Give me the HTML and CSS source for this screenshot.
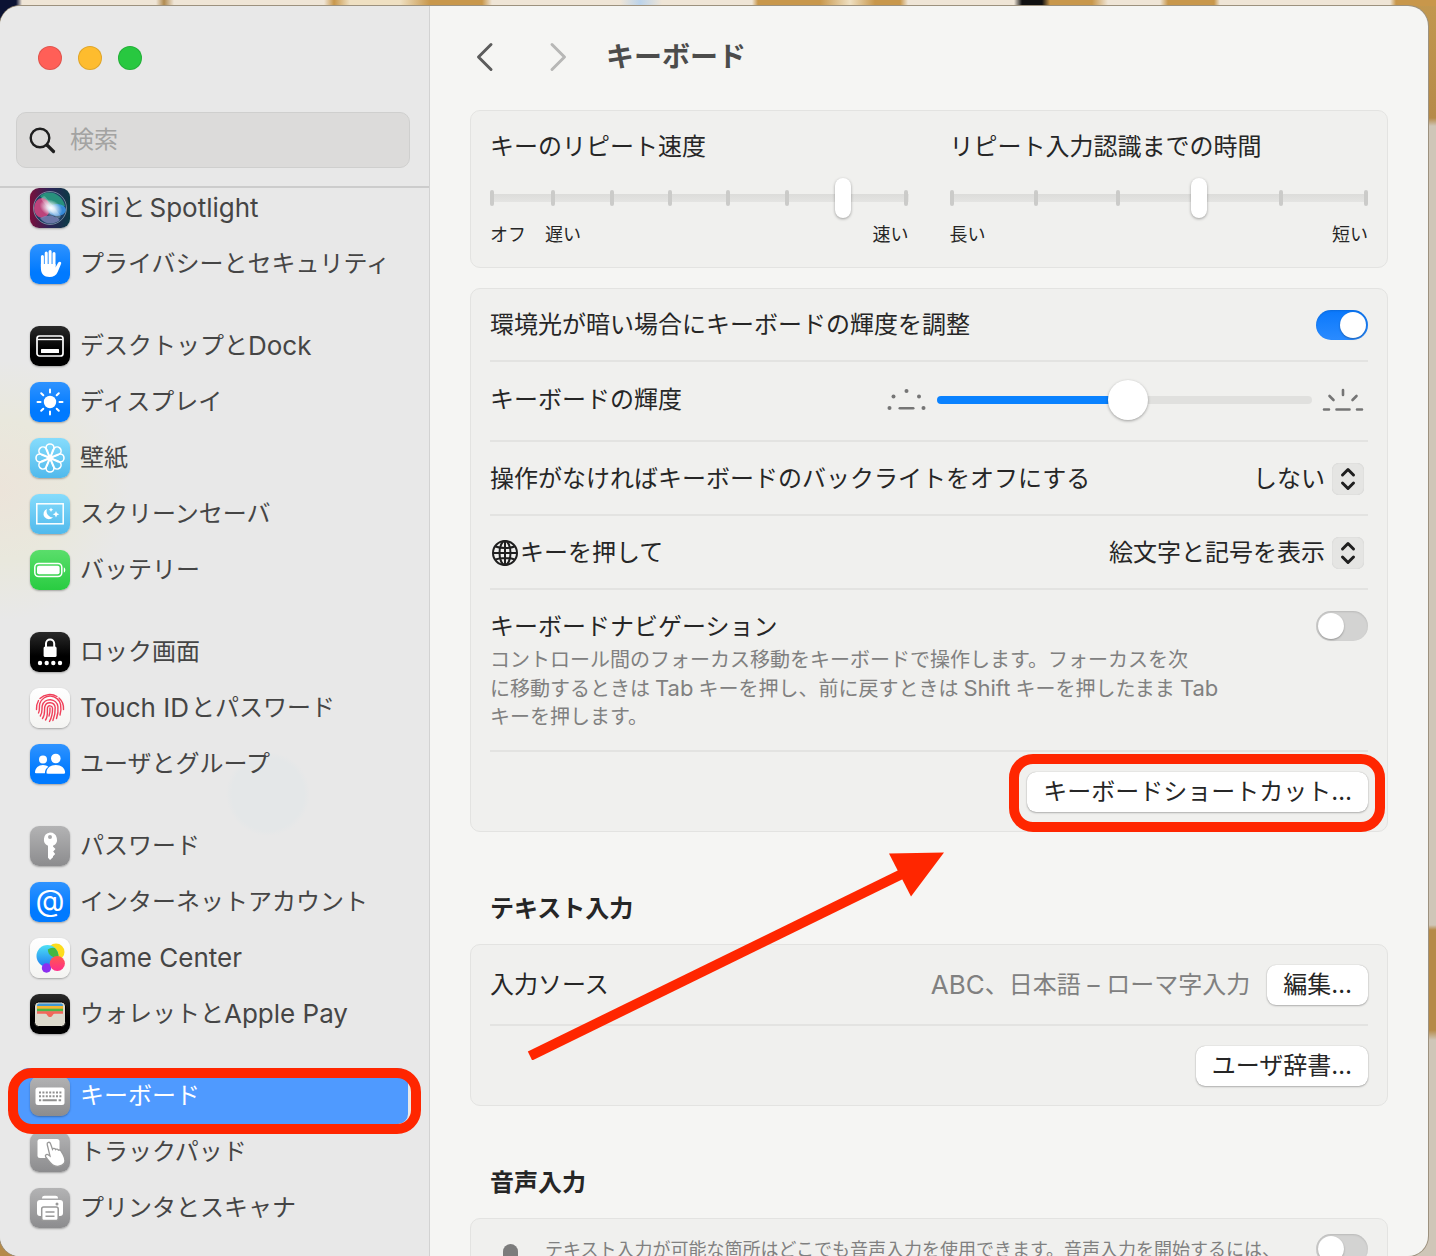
FILE: index.html
```html
<!DOCTYPE html>
<html lang="ja">
<head>
  <meta charset="UTF-8" />
  <meta name="viewport" content="width=device-width, initial-scale=1.0"/>
  <title>キーボード</title>
  <link rel="stylesheet" href="styles.css">
</head>
<body>
<div class="window">
  <aside class="sidebar">
    <div class="lights">
      <button class="light red" aria-label="閉じる"></button>
      <button class="light yellow" aria-label="しまう"></button>
      <button class="light green" aria-label="拡大"></button>
    </div>
    <label class="search">
      <svg width="28" height="28" viewBox="0 0 28 28" fill="none" stroke="#1f1f1f" stroke-linecap="round"><circle cx="11" cy="12" r="9.300" stroke-width="2.400"/><path d="M18 19l6.500 6.500" stroke-width="3.200"/></svg>
      <input type="search" placeholder="検索" aria-label="検索">
    </label>
    <nav class="list">
      <ul>
        <li><a href="#siri"><span class="icon siri"><svg viewBox="0 0 40 40">
          <defs>
            <linearGradient id="siriBg"><stop offset="0" stop-color="#7a0f3c"/><stop offset=".5" stop-color="#2b2358"/><stop offset="1" stop-color="#0c3b45"/></linearGradient>
            <radialGradient id="siriGlow"><stop offset="0" stop-color="#fff"/><stop offset=".35" stop-color="#eef6fb" stop-opacity=".85"/><stop offset="1" stop-color="#fff" stop-opacity="0"/></radialGradient>
          </defs>
          <rect width="40" height="40" rx="9" fill="url(#siriBg)"/>
          <circle cx="20" cy="20" r="16.500" fill="#1d3f63"/>
          <path d="M10 8c8-7 22-3 25 10-8 4-16 1-25-10z" fill="#2a9f80" opacity=".85"/>
          <ellipse cx="12" cy="20" rx="8" ry="10" fill="#d8447f" opacity=".85"/>
          <ellipse cx="27" cy="22" rx="9" ry="6" fill="#3b96ea" opacity=".85"/>
          <path d="M10 30c8-4 14-3 20 2-6 5-15 5-20-2z" fill="#8085b8" opacity=".8"/>
          <path d="M14 11l14 17" stroke="#fff" stroke-width="5" stroke-linecap="round" opacity=".25"/>
          <ellipse cx="21" cy="20" rx="12" ry="8" transform="rotate(25 21 20)" fill="url(#siriGlow)"/>
          <circle cx="20" cy="20" r="16.500" fill="none" stroke="#a9b9c4" stroke-opacity=".6"/>
        </svg></span><span class="latin">Siri</span>と<span class="latin">Spotlight</span></a></li>
        <li><a href="#privacy"><span class="icon blue"><svg viewBox="0 0 40 40"><g stroke="#fff" stroke-width="3" stroke-linecap="round" fill="none"><path d="M12.400 12.500V23M16.200 9v13M20.100 7.600V22M24 9.400V22"/></g><path d="M10.900 20h14.600v3.400l2.600-4.600c1-1.900 3.800-1.200 3 1l-3.300 7.900c-1.600 3.700-4.300 5.300-8.200 5.300-5.600 0-8.700-3.400-8.700-8.500z" fill="#fff"/></svg></span>プライバシーとセキュリティ</a></li>
      </ul>
      <ul>
        <li><a href="#dock"><span class="icon black"><svg viewBox="0 0 40 40"><rect x="7" y="10" width="26" height="20" rx="2.500" fill="none" stroke="#fff" stroke-width="1.700"/><path d="M7.500 13.500h25" stroke="#fff" stroke-width="1.400"/><rect x="11" y="23" width="18" height="4" rx=".5" fill="#fff"/></svg></span>デスクトップと<span class="latin">Dock</span></a></li>
        <li><a href="#display"><span class="icon blue"><svg viewBox="0 0 40 40"><circle cx="20" cy="20" r="6.200" fill="#fff"/><path d="M20 7.500v3M20 29.500v3M7.500 20h3M29.500 20h3M11.200 11.200l2.100 2.100M26.700 26.700l2.100 2.100M28.800 11.200l-2.100 2.100M13.300 26.700l-2.100 2.100" stroke="#fff" stroke-width="2" stroke-linecap="round"/></svg></span>ディスプレイ</a></li>
        <li><a href="#wallpaper"><span class="icon cyan"><svg viewBox="0 0 40 40" fill="none" stroke="#fff" stroke-width="1.600">
          <defs><path id="petal" d="M20 20C18 15 16 13 16 10a4 4 0 0 1 8 0c0 3-2 5-4 10z"/></defs>
          <use href="#petal"/><use href="#petal" transform="rotate(45 20 20)"/><use href="#petal" transform="rotate(90 20 20)"/><use href="#petal" transform="rotate(135 20 20)"/><use href="#petal" transform="rotate(180 20 20)"/><use href="#petal" transform="rotate(225 20 20)"/><use href="#petal" transform="rotate(270 20 20)"/><use href="#petal" transform="rotate(315 20 20)"/>
          <circle cx="20" cy="20" r="2.500"/>
        </svg></span>壁紙</a></li>
        <li><a href="#screensaver"><span class="icon cyan"><svg viewBox="0 0 40 40"><rect x="6.800" y="9.800" width="26.400" height="20" fill="none" stroke="#fff" stroke-width="1.500"/><path d="M17 15a5.300 5.300 0 1 0 6 8.200A6 6 0 0 1 17 15z" fill="#fff"/><path d="M21 13.500l.7 1.500 1.500.7-1.500.7-.7 1.500-.7-1.500-1.500-.7 1.500-.7zM26 17l1 2.300 2.300 1-2.300 1-1 2.300-1-2.300-2.300-1 2.300-1z" fill="#fff"/></svg></span>スクリーンセーバ</a></li>
        <li><a href="#battery"><span class="icon grass"><svg viewBox="0 0 40 40"><rect x="4.800" y="13.500" width="27" height="13" rx="3.800" fill="none" stroke="#fff" stroke-width="1.500"/><rect x="7" y="15.700" width="22.600" height="8.600" rx="2" fill="#fff"/><path d="M33.800 17.500c2 .6 2 4.400 0 5z" fill="#fff"/></svg></span>バッテリー</a></li>
      </ul>
      <ul>
        <li><a href="#lock"><span class="icon black"><svg viewBox="0 0 40 40"><rect x="13.600" y="14.500" width="13" height="10.500" rx="1.600" fill="#fff"/><path d="M16 15v-3.500a4.100 4.100 0 0 1 8.200 0V15" fill="none" stroke="#fff" stroke-width="2"/><g fill="#fff"><circle cx="10" cy="31" r="2.200"/><circle cx="16.700" cy="31" r="2.200"/><circle cx="23.300" cy="31" r="2.200"/><circle cx="30" cy="31" r="2.200"/></g></svg></span>ロック画面</a></li>
        <li><a href="#touchid"><span class="icon white"><svg viewBox="0 0 40 40" fill="none" stroke="#f0405a" stroke-width="1.400" stroke-linecap="round">
          <path d="M10 10.500a14 14 0 0 1 17-2M29 10a14 14 0 0 1 4.500 11.500M6.500 21.500c-.3-3 .4-6 2-9"/>
          <path d="M8.500 25c1.700-3 .3-6 1.300-9.500a10.800 10.800 0 0 1 20.800 1c.7 4 .4 7-.6 10.500"/>
          <path d="M10.300 28c2.600-3.600 1.200-7 2-10.500a8 8 0 0 1 15.600 1c.5 4.500 0 8-1.400 12"/>
          <path d="M12.500 30.500c3-4 1.600-8 2.300-11.800a5.300 5.300 0 0 1 10.400.8c.2 5-.6 9-2.300 13"/>
          <path d="M15.500 32c3-4.500 1.400-9.500 2-12.500a2.600 2.600 0 0 1 5 .5c.2 5-.8 9.500-3 13.500"/>
          <path d="M20 20c.3 4-.3 6-1 8"/>
        </svg></span><span class="latin">Touch ID</span>とパスワード</a></li>
        <li><a href="#users"><span class="icon blue"><svg viewBox="0 0 40 40" fill="#fff"><circle cx="13" cy="15.500" r="4"/><circle cx="25.800" cy="14.500" r="4.800"/><path d="M5 28.500c0-4.500 3.600-7.500 8-7.500 2.200 0 4 .7 5.300 1.800-2 1.400-3.300 3.400-3.400 6.500H6c-.7 0-1-.3-1-.8zM16.500 28.500c0-4.500 4-7.500 9.300-7.500s9.300 3 9.300 7.500c0 .8-.4 1.200-1.200 1.200H17.700c-.8 0-1.200-.4-1.200-1.200z"/></svg></span>ユーザとグループ</a></li>
      </ul>
      <ul>
        <li><a href="#passwords"><span class="icon gray"><svg viewBox="0 0 40 40"><path fill="#fff" fill-rule="evenodd" d="M20 6.500a7 7 0 0 1 3 13.300v.7l2.500 2.600-2.300 2.500 2 2.300-2.200 2.400v1L20 34l-2-2.200V19.800A7 7 0 0 1 20 6.500zm0 2.500a2 2 0 1 0 0 4 2 2 0 0 0 0-4z"/></svg></span>パスワード</a></li>
        <li><a href="#internet"><span class="icon blue at">@</span>インターネットアカウント</a></li>
        <li><a href="#gamecenter"><span class="icon white"><svg viewBox="0 0 40 40"><defs><linearGradient id="gcBlue" x2="0" y2="1"><stop offset="0" stop-color="#4fe0f5"/><stop offset="1" stop-color="#1d7cf0"/></linearGradient><linearGradient id="gcRed" x2="0" y2="1"><stop offset="0" stop-color="#ff5a4d"/><stop offset="1" stop-color="#ff2d8a"/></linearGradient></defs><circle cx="26" cy="14" r="8.500" fill="#fddc1c"/><circle cx="17.500" cy="18" r="11" fill="url(#gcBlue)"/><path d="M17.800 11.500a8.500 8.500 0 0 1 7-1.500 11 11 0 0 1 3.500 9.500 8.500 8.500 0 0 1-10.500-8z" fill="#42b843"/><circle cx="16.500" cy="30" r="4.700" fill="#8b2ff0"/><circle cx="27.300" cy="25.500" r="7.600" fill="url(#gcRed)"/></svg></span><span class="latin">Game Center</span></a></li>
        <li><a href="#wallet"><span class="icon black"><svg viewBox="0 0 40 40"><rect x="4.500" y="8" width="31" height="24.500" rx="4" fill="#dcd9cc" stroke="#000" stroke-width="1"/><path d="M7 14v-2.500A2 2 0 0 1 9 9.500h22a2 2 0 0 1 2 2V14z" fill="#3f97d3"/><path d="M7 12h26v3H7z" fill="#f5b52f"/><path d="M7 14.700h26v3H7z" fill="#4bb648"/><path d="M7 17.200h26v2.500h-8.500c-1 0-1.500 1-2 1.800-1.300 2-3.700 2-5 0-.5-.8-1-1.800-2-1.800H7z" fill="#f2675a"/></svg></span>ウォレットと<span class="latin">Apple Pay</span></a></li>
      </ul>
      <ul>
        <li class="selected"><a href="#keyboard" aria-current="page"><span class="icon gray"><svg viewBox="0 0 40 40"><rect x="5.500" y="11.500" width="29" height="17.500" rx="2.500" fill="#fff"/><g stroke="#8f8f8f" stroke-width="2"><path d="M9 16.500h22.500M9 20.300h22.500" stroke-dasharray="2 1.400"/><path d="M9 24.300h2.200M12.600 24.300h14.200M28.600 24.300h2.500"/></g></svg></span>キーボード</a></li>
        <li><a href="#trackpad"><span class="icon gray"><svg viewBox="0 0 40 40"><rect x="7.500" y="7" width="22" height="19" rx="2.500" fill="#fff"/><path d="M17.200 12.500c-.6-2.300 2.600-3.100 3.300-.9l2 5.700c.7-1.300 2.600-1 3 .2.900-.8 2.500-.5 2.900.7 1-.5 2.200 0 2.700 1 3 4.500 5.200 8.300 3.200 12-2.300 3.600-8.600 4-11.800 1.600-2.500-1.800-4.300-4.600-6.800-7.800-1-1.500.5-3.200 2.300-2.300l2 1.300z" fill="#fff" stroke="#999" stroke-width="1.300"/></svg></span>トラックパッド</a></li>
        <li><a href="#printers"><span class="icon gray"><svg viewBox="0 0 40 40"><path d="M12 10.500c0-2 1-2.700 2.500-2.700h11c1.500 0 2.500.7 2.500 2.700z" fill="#fff"/><rect x="7" y="12" width="26" height="16" rx="3" fill="#fff"/><circle cx="27" cy="16" r="1.500" fill="#999"/><rect x="11.700" y="19" width="16.500" height="13.500" rx="2" fill="#fff" stroke="#999" stroke-width="1.500"/><path d="M15.500 24h9M15.500 28.200h9" stroke="#999" stroke-width="1.500"/></svg></span>プリンタとスキャナ</a></li>
      </ul>
    </nav>
  </aside>

  <main class="main">
    <header class="toolbar">
      <button class="nav" aria-label="戻る"><svg width="20" height="32" viewBox="0 0 20 32"><path d="M16 3.500L3.500 16 16 28.500"/></svg></button>
      <button class="nav" aria-label="進む" disabled><svg width="20" height="32" viewBox="0 0 20 32"><path d="M4 3.500L16.500 16 4 28.500"/></svg></button>
      <h1>キーボード</h1>
    </header>

    <section class="card speeds">
      <div class="speed">
        <label for="repeat">キーのリピート速度</label>
        <div class="slider">
          <div class="ticks"><i></i><i></i><i></i><i></i><i></i><i></i><i></i><i></i></div>
          <input type="range" id="repeat" min="0" max="7" value="6">
        </div>
        <div class="ends"><span>オフ</span><span>遅い</span><span class="end">速い</span></div>
      </div>
      <div class="speed">
        <label for="delay">リピート入力認識までの時間</label>
        <div class="slider">
          <div class="ticks"><i></i><i></i><i></i><i></i><i></i><i></i></div>
          <input type="range" id="delay" min="0" max="5" value="3">
        </div>
        <div class="ends"><span>長い</span><span class="end">短い</span></div>
      </div>
    </section>

    <section class="card">
      <div class="row">
        <label for="ambient">環境光が暗い場合にキーボードの輝度を調整</label>
        <input type="checkbox" class="switch" id="ambient" checked>
      </div>
      <div class="row level">
        <label for="brightness">キーボードの輝度</label>
        <div class="brightness">
          <svg width="40" height="26" viewBox="0 0 40 26" fill="#757575"><circle cx="19.500" cy="4" r="2"/><circle cx="6.500" cy="9.500" r="2"/><circle cx="32" cy="9.500" r="2"/><circle cx="2.500" cy="21" r="2"/><circle cx="36.500" cy="21" r="2"/><rect x="11.500" y="20" width="16" height="2.600" rx="1.300"/></svg>
          <input type="range" id="brightness" min="0" max="100" value="51">
          <svg width="42" height="26" viewBox="0 0 42 26" stroke="#757575" stroke-width="2.600" stroke-linecap="round"><path d="M21 3v5M7.500 9l4 4M34.500 9l-4 4M2 22.500h5M14.500 22.500h13M35 22.500h5"/></svg>
        </div>
      </div>
      <div class="row mid">
        <label for="backlight">操作がなければキーボードのバックライトをオフにする</label>
        <div class="popup">
          <select id="backlight"><option>しない</option></select>
          <svg width="32" height="32" viewBox="0 0 32 32"><path d="M10.500 12L16 6.500l5.500 5.500M10.500 20l5.500 5.500 5.500-5.500"/></svg>
        </div>
      </div>
      <div class="row mid">
        <label for="globe" class="globe"><svg width="30" height="30" viewBox="0 0 30 30" fill="none" stroke="#1f1f1f" stroke-width="2"><circle cx="15" cy="15" r="12"/><ellipse cx="15" cy="15" rx="5.500" ry="12"/><path d="M15 3v24M3 15h24M5.500 8.500c5 2 14 2 19 0M5.500 21.500c5-2 14-2 19 0"/></svg>キーを押して</label>
        <div class="popup">
          <select id="globe"><option>絵文字と記号を表示</option></select>
          <svg width="32" height="32" viewBox="0 0 32 32"><path d="M10.500 12L16 6.500l5.500 5.500M10.500 20l5.500 5.500 5.500-5.500"/></svg>
        </div>
      </div>
      <div class="row top">
        <div>
          <label for="navigation">キーボードナビゲーション</label>
          <p>コントロール間のフォーカス移動をキーボードで操作します。フォーカスを次<br>に移動するときは<span class="latin">Tab</span>キーを押し、前に戻すときは<span class="latin">Shift</span>キーを押したまま<span class="latin">Tab</span><br>キーを押します。</p>
        </div>
        <input type="checkbox" class="switch" id="navigation">
      </div>
      <div class="row right">
        <div class="marked"><button class="push">キーボードショートカット…</button></div>
      </div>
    </section>

    <h2>テキスト入力</h2>
    <section class="card">
      <div class="row tall">
        <span>入力ソース</span>
        <div class="source"><span class="latin">ABC</span>、日本語 – ローマ字入力<button class="push">編集…</button></div>
      </div>
      <div class="row right">
        <button class="push">ユーザ辞書…</button>
      </div>
    </section>

    <h2>音声入力</h2>
    <section class="card">
      <div class="row dictation">
        <svg width="40" height="48" viewBox="0 0 40 48"><rect x="13" y="6" width="15" height="26" rx="7.500" fill="#7c7c7c"/><path d="M8 24v3a12.500 12.500 0 0 0 25 0v-3M20.500 39v6" fill="none" stroke="#7c7c7c" stroke-width="2.500"/></svg>
        <label for="dictation">テキスト入力が可能な箇所はどこでも音声入力を使用できます。音声入力を開始するには、</label>
        <input type="checkbox" class="switch" id="dictation">
      </div>
    </section>

    <svg class="arrow" width="424" height="214" viewBox="0 0 424 214"><path d="M4 210L380 26" stroke="#ff2600" stroke-width="10"/><path d="M418 6.500l-55 1 22 43z" fill="#ff2600"/></svg>
  </main>
</div>
</body>
</html>
```
FILE: styles.css
```css
* {
  box-sizing: border-box;
}
body {
  margin: 0;
  height: 100vh;
  overflow: hidden;
  display: flex;
  padding: 6px 8px 0 0;
  font-family: Inter, "Noto Sans CJK JP", sans-serif;
  font-size: 24px;
  line-height: 32px;
  color: #262626;
  /* wallpaper showing around the window */
  background:
    linear-gradient(90deg, #0b1233 16px, #efe5d6 22px, #efe5d6 156px, #b08a50 164px, #efe5d6 174px, #efe5d6 324px, #c8974b 334px, #efe0c2 350px, #efe0c2 400px, #c8974b 430px, #c8974b 482px, #efe5d6 492px, #efe5d6 620px, #bcd3ea 640px, #efe5d6 662px, #efe5d6 752px, #c8974b 758px, #c8974b 820px, #efe0c2 850px, #c8974b 875px, #c8974b 900px, #efe5d6 908px, #efe5d6 1014px, #111 1022px, #111 1042px, #c8974b 1050px, #c8974b 1092px, #efe5d6 1108px, #efe5d6 1160px, #c8974b 1168px, #c8974b 1214px, #efe5d6 1220px, #efe5d6 1390px, #c8974b 1396px) top / 100% 6px no-repeat,
    linear-gradient(#c2984f, #b58a49 118px, #cfc6b8 126px, #cfc6b8 925px, #b58a49 930px, #b58a49 1030px, #cfc6b8 1040px) right / 30px 100% no-repeat,
    linear-gradient(#0b1233 50%, #b58a49 50%);
}
ul, h1, h2, p {
  margin: 0;
  padding: 0;
}
ul {
  list-style: none;
}
button, input, select {
  font: inherit;
  color: inherit;
  margin: 0;
  padding: 0;
  border: 0;
  background: none;
}
svg {
  flex: none;
}
.window {
  flex: 1;
  display: flex;
  min-width: 0;
  overflow: hidden;
  border-radius: 20px;
  background: #f5f5f3;
  box-shadow: 0 0 0 1px #9c917e;
}

/* sidebar */
.sidebar {
  flex: none;
  width: 430px;
  display: flex;
  flex-direction: column;
  border-right: 1px solid #d2d2d2;
  color: #454545;
  background:
    radial-gradient(circle at 268px 788px, #e4e7e8 36px, transparent 42px),
    radial-gradient(circle at 0 484px, #ece4da, #e9e8dd 70px, transparent 130px),
    #e8e8e8;
}
.lights {
  display: flex;
  gap: 16px;
  padding: 40px 38px 42px;
}
.light {
  width: 24px;
  height: 24px;
  border-radius: 50%;
  box-shadow: inset 0 0 0 1px rgba(0,0,0,0.12);
}
.light.red {
  background: #ff5f57;
}
.light.yellow {
  background: #febc2e;
}
.light.green {
  background: #28c840;
}
.search {
  display: flex;
  align-items: center;
  gap: 13px;
  height: 56px;
  margin: 0 19px 18px 16px;
  padding: 0 12px;
  border: 1px solid #cfcfce;
  border-radius: 10px;
  background: #dcdbda;
}
.search input {
  flex: 1;
  min-width: 0;
  outline: 0;
}
.search input::placeholder {
  color: #a3a3a2;
}
.list {
  flex: 1;
  overflow: hidden;
  border-top: 2px solid #cccccc;
}
.list ul {
  margin: 0 21px 26px 18px;
}
.list ul:first-child {
  margin-top: -8px;
}
.list a {
  display: flex;
  align-items: center;
  height: 56px;
  padding-left: 12px;
  border-radius: 10px;
  color: inherit;
  text-decoration: none;
}
.selected {
  position: relative;
  z-index: 1;
  color: #fff;
}
.selected a {
  background: #4f9aff;
}
.selected::after {
  content: "";
  position: absolute;
  inset: 0 -13px -10px -10px;
  border: 10px solid #ff2600;
  border-radius: 24px;
}
.latin {
  font-size: 26px;
  margin: 0 2px 0 4px;
}
.icon + .latin {
  margin-left: 0;
}
.icon {
  flex: none;
  width: 40px;
  height: 40px;
  margin-right: 10px;
  border-radius: 9px;
  box-shadow: 0 1px 2px rgba(0,0,0,0.3);
}
.icon svg {
  display: block;
}
.icon.blue {
  background: linear-gradient(#2f93ff, #007aff 70%);
}
.icon.black {
  background: linear-gradient(#2a2a2a, #000 60%);
}
.icon.cyan {
  background: linear-gradient(#86dcfc, #50b9ec);
}
.icon.grass {
  background: linear-gradient(#5ade6b, #29cc41);
}
.icon.white {
  background: linear-gradient(#fff, #f4f4f2);
}
.icon.gray {
  background: linear-gradient(#b3b3b4, #8c8c8e);
}
.icon.at {
  color: #fff;
  font-size: 30px;
  line-height: 36px;
  text-align: center;
}

/* main pane */
.main {
  flex: 1;
  min-width: 0;
  position: relative;
  overflow: hidden;
  padding: 0 40px;
}
.toolbar {
  display: flex;
  align-items: center;
  height: 102px;
  margin-bottom: 2px;
  padding-left: 5px;
}
.nav {
  display: flex;
  margin-right: 53px;
}
.nav + .nav {
  margin-right: 38px;
}
.nav path {
  fill: none;
  stroke: #5c5c5c;
  stroke-width: 3;
  stroke-linecap: round;
  stroke-linejoin: round;
}
.nav:disabled path {
  stroke: #b7b7b6;
}
h1 {
  font-size: 28px;
  color: #4c4c4b;
}
h2 {
  font-size: 24px;
  margin: 61px 20px 19px;
}
.card {
  padding: 0 19px;
  border: 1px solid #e3e3e1;
  border-radius: 10px;
  background: #f0f0ee;
}
.card + .card {
  margin-top: 20px;
}
.speeds {
  display: grid;
  grid-template-columns: 1fr 1fr;
  gap: 41px;
  padding-top: 20px;
  padding-bottom: 20px;
}
.speed label {
  display: block;
  margin-bottom: 15px;
}
.slider {
  display: grid;
  align-items: center;
  height: 40px;
}
.slider > * {
  grid-area: 1 / 1;
}
.ticks {
  display: flex;
  justify-content: space-between;
  background: linear-gradient(#dcdcda, #e4e4e2) center / 100% 8px no-repeat;
}
.ticks i {
  width: 4px;
  height: 16px;
  border-radius: 2px;
  background: #cbcbc9;
}
.ticks i:first-child {
  margin-right: 3px;
}
.ticks i:last-child {
  margin-left: 3px;
}
input[type="range"] {
  appearance: none;
  width: 100%;
  height: 40px;
}
input[type="range"]::-webkit-slider-thumb {
  appearance: none;
  width: 16px;
  height: 40px;
  border-radius: 8px;
  background: #fff;
  box-shadow: 0 1px 3px rgba(0,0,0,0.35);
}
.ends {
  display: flex;
  gap: 19px;
  margin-top: 5px;
  font-size: 18px;
  line-height: 24px;
}
.ends .end {
  margin-left: auto;
}
.row {
  display: flex;
  align-items: center;
  justify-content: space-between;
  min-height: 73px;
  border-bottom: 2px solid #e3e3e1;
}
.row.mid {
  min-height: 74px;
  padding-top: 2px;
}
.row.tall {
  min-height: 81px;
}
.row.level {
  min-height: 80px;
  padding-bottom: 2px;
}
.row.top {
  align-items: flex-start;
  padding: 21px 0 19px;
}
.row.right {
  justify-content: flex-end;
  min-height: 79px;
}
.row:last-child {
  border-bottom: 0;
}
.row p {
  margin-top: 3px;
  font-size: 20px;
  line-height: 28px;
  color: #808080;
}
.row p .latin {
  font-size: 22px;
  margin: 0 5px;
}
.switch {
  appearance: none;
  flex: none;
  display: flex;
  width: 52px;
  height: 30px;
  padding: 2px;
  border-radius: 15px;
  background: #d3d3d2;
  box-shadow: inset 0 1px 2px rgba(0,0,0,0.12);
}
.switch::before {
  content: "";
  width: 26px;
  height: 26px;
  border-radius: 50%;
  background: #fff;
  box-shadow: 0 1px 2px rgba(0,0,0,0.3);
}
.switch:checked {
  justify-content: flex-end;
  background: linear-gradient(#0a78fb, #2a8bff);
}
.brightness {
  display: flex;
  align-items: center;
  gap: 10px;
  width: 481px;
  padding-right: 4px;
}
.brightness input[type="range"] {
  flex: 1;
  min-width: 0;
}
.brightness input[type="range"]::-webkit-slider-runnable-track {
  height: 8px;
  border-radius: 4px;
  background: linear-gradient(90deg, #0a82ff 51%, #e0e0de 51%);
}
.brightness input[type="range"]::-webkit-slider-thumb {
  width: 40px;
  margin-top: -16px;
  border-radius: 50%;
}
.popup {
  display: grid;
  align-items: center;
  margin-right: 4px;
}
.popup > * {
  grid-area: 1 / 1;
}
.popup select {
  appearance: none;
  padding-right: 39px;
  text-align-last: right;
}
.popup svg {
  justify-self: end;
  pointer-events: none;
  border-radius: 7px;
  background: #e5e5e3;
  box-shadow: inset 0 0 1px #bbb;
}
.popup path {
  fill: none;
  stroke: #1f1f1f;
  stroke-width: 3;
  stroke-linecap: round;
  stroke-linejoin: round;
}
.globe {
  display: flex;
  align-items: center;
}
.push {
  height: 40px;
  padding: 0 16px;
  border-radius: 9px;
  background: #fff;
  box-shadow: 0 0 1px rgba(0,0,0,0.3), 0 1px 2px rgba(0,0,0,0.25);
}
.marked {
  display: flex;
  position: relative;
}
.marked::after {
  content: "";
  position: absolute;
  inset: -18px -17px -20px -18px;
  border: 10px solid #ff2600;
  border-radius: 24px;
  pointer-events: none;
}
.source {
  display: flex;
  align-items: center;
  color: #808080;
}
.source .latin {
  margin: 0;
}
.source .push {
  margin-left: 17px;
  color: #262626;
}
.dictation {
  align-items: flex-start;
  padding-top: 15px;
  font-size: 18px;
  color: #808080;
}
.dictation svg {
  margin: 4px 15px 0 0;
}
.dictation label {
  flex: 1;
}
.arrow {
  position: absolute;
  left: 96px;
  top: 840px;
  pointer-events: none;
}
```
